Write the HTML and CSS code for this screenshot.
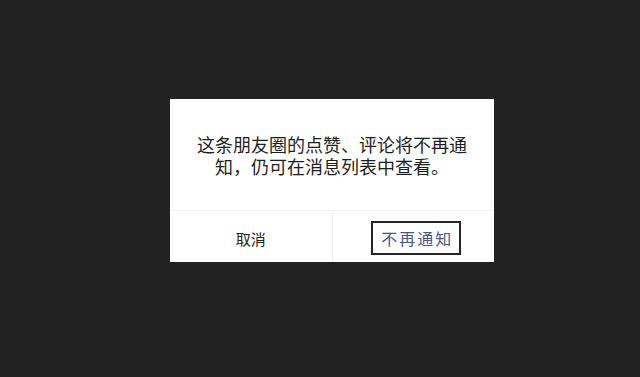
FILE: index.html
```html
<!DOCTYPE html>
<html>
<head>
<meta charset="utf-8">
<link rel="stylesheet" href="styles.css">
</head>
<body>
<div class="stage">
  <div class="dialog">
    <div class="message">
      <div class="line">这条朋友圈的点赞、评论将不再通</div>
      <div class="line">知，仍可在消息列表中查看。</div>
    </div>
    <div class="actions">
      <div class="btn cancel">取消</div>
      <div class="btn confirm"><span class="boxed">不再通知</span></div>
    </div>
  </div>
</div>
</body>
</html>
```
FILE: styles.css
```css
html, body {
  margin: 0;
  padding: 0;
  background: #222222;
}
.stage {
  width: 640px;
  height: 377px;
  display: flex;
  align-items: flex-start;
  justify-content: flex-start;
  padding: 99px 0 0 170px;
  box-sizing: border-box;
}
.dialog {
  width: 324px;
  height: 163px;
  background: #ffffff;
  display: flex;
  flex-direction: column;
  font-family: "Noto Sans CJK SC", "Noto Sans", sans-serif;
}
.message {
  height: 112px;
  box-sizing: border-box;
  padding-top: 35px;
  display: flex;
  flex-direction: column;
  align-items: center;
  gap: 1px;
  font-size: 18px;
  color: #1e1e1e;
  border-bottom: 1px solid #f3f3f3;
}
.line {
  line-height: 21px;
  height: 21px;
}
.actions {
  flex: 1;
  display: flex;
}
.btn {
  flex: 1;
  display: flex;
  align-items: center;
  justify-content: center;
  font-size: 15px;
}
.cancel {
  color: #222;
  border-right: 1px solid #f0f0f0;
  padding-top: 4px;
}
.confirm {
  padding-top: 3px;
}
.boxed {
  display: inline-flex;
  align-items: center;
  justify-content: center;
  width: 90px;
  height: 34px;
  box-sizing: border-box;
  border: 2px solid #262626;
  color: #4b5583;
  letter-spacing: 2px;
  font-size: 16px;
  margin-left: 6px;
  padding-left: 2px;
}
```
